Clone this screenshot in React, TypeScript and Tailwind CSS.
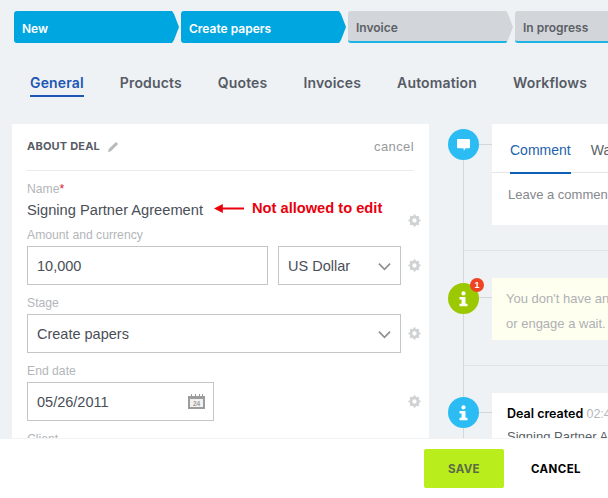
import React from "react";

const stages = [
  { name: "New", active: true, width: "w-[165px]" },
  { name: "Create papers", active: true, width: "w-[165px]" },
  { name: "Invoice", active: false, width: "w-[165px]" },
  { name: "In progress", active: false, width: "w-[165px]" },
];

const tabs = ["General", "Products", "Quotes", "Invoices", "Automation", "Workflows"];

const Gear = ({ className = "" }: { className?: string }) => (
  <svg viewBox="0 0 24 24" className={`w-[13px] h-[13px] shrink-0 ${className}`} fill="none">
    <circle cx="12" cy="12" r="6.5" stroke="#cfd1d3" strokeWidth="5" />
    <path d="M12 1v5M12 18v5M1 12h5M18 12h5M4.2 4.2l3.6 3.6M16.2 16.2l3.6 3.6M4.2 19.8l3.6-3.6M16.2 7.8l3.6-3.6" stroke="#cfd1d3" strokeWidth="4" />
  </svg>
);

const Chevron = () => (
  <svg viewBox="0 0 14 9" className="w-[13px] h-[9px]" fill="none">
    <path d="M1 1.5l6 6 6-6" stroke="#8b8f94" strokeWidth="1.8" />
  </svg>
);

const Info = () => (
  <svg viewBox="0 0 16 20" className="w-[13px] h-[16px]" fill="#fff">
    <circle cx="8" cy="3" r="2.6" />
    <path d="M3 7.5h7.5V16H13v3H3v-3h2.6v-5.5H3z" />
  </svg>
);

const Label = ({ children, className = "" }: { children: React.ReactNode; className?: string }) => (
  <div className={`text-[12.2px] leading-[14px] text-[#b3b6ba] ${className}`}>{children}</div>
);

export default function App() {
  return (
    <div className="relative w-[608px] h-[498px] overflow-hidden bg-[#eef2f4] font-['Liberation_Sans',sans-serif]">
      {/* stages */}
      <div className="flex gap-[2px] pl-[14px] pt-[11px] w-[800px]">
        {stages.map((s) => (
          <div
            key={s.name}
            className={`${s.width} h-[32px] rounded-l-[3px] flex items-center pl-[8px] pt-[4px] font-['Inter',sans-serif] font-semibold text-[12px] [clip-path:polygon(0_0,calc(100%-7px)_0,calc(100%-5px)_3px,100%_50%,calc(100%-5px)_calc(100%-3px),calc(100%-7px)_100%,0_100%)] ${
              s.active ? "bg-[#00a6df] text-white" : "bg-[#d2d5d9] text-[#5c6066] border-b-2 border-b-[#1cb4e4]"
            }`}
          >
            {s.name}
          </div>
        ))}
      </div>

      {/* tabs */}
      <div className="flex gap-[36px] pl-[30px] mt-[29px] h-[25px] font-['Inter',sans-serif] font-semibold text-[14px] tracking-[0.15px] leading-[22px] text-[#565b66]">
        {tabs.map((t, i) => (
          <div key={t} className={i === 0 ? "text-[#1e56b4] h-[25px] border-b-2 border-b-[#1e56b4]" : ""}>
            {t}
          </div>
        ))}
      </div>

      <div className="flex mt-[27px] pl-[12px]">
        {/* about deal */}
        <div className="w-[417px] h-[360px] shrink-0 bg-white pl-[15px]">
          <div className="flex items-center w-[387px] h-[47px] border-b border-b-[#e8eaec] pb-[1px]">
            <span className="text-[11px] font-bold tracking-[0.2px] text-[#565b66] font-['Inter',sans-serif]">ABOUT DEAL</span>
            <svg viewBox="0 0 12 12" className="w-[11px] h-[11px] ml-[8px]" fill="#b8babd">
              <path d="M0 12l.8-3.2L8.6 1l2.4 2.4-7.8 7.8z" />
            </svg>
            <span className="ml-auto text-[13px] tracking-[0.4px] text-[#97999d]">cancel</span>
          </div>

          <Label className="mt-[11px]">
            Name<span className="text-[#e0202a]">*</span>
          </Label>
          <div className="flex items-center h-[24px] mt-[2px] text-[14.67px] text-[#4a4e57]">
            Signing Partner Agreement
            <svg viewBox="0 0 34 10" className="w-[30px] h-[9px] ml-[11px] mb-[3px]" fill="#e8000d">
              <path d="M0 5l10-5v4h24v2H10v4z" />
            </svg>
            <span className="ml-[8px] mb-[4px] font-bold text-[14.67px] text-[#e8000d]">Not allowed to edit</span>
          </div>
          <div className="relative h-0">
            <Gear className="absolute left-[381px] top-[-8px]" />
          </div>

          <Label className="mt-[6px]">Amount and currency</Label>
          <div className="flex items-center mt-[4px]">
            <div className="w-[241px] h-[39px] shrink-0 border border-[#c4c5c7] flex items-center pl-[9px] pt-[2px] text-[14.5px] text-[#4a4e57]">10,000</div>
            <div className="w-[123px] h-[39px] shrink-0 ml-[10px] border border-[#c4c5c7] flex items-center justify-between pl-[9px] pr-[9px] pt-[2px] text-[14.5px] text-[#4a4e57]">
              US Dollar
              <Chevron />
            </div>
            <Gear className="ml-[7px]" />
          </div>

          <Label className="mt-[11px]">Stage</Label>
          <div className="flex items-center mt-[4px]">
            <div className="w-[374px] h-[39px] shrink-0 border border-[#c4c5c7] flex items-center justify-between pl-[9px] pr-[9px] pt-[2px] text-[14.5px] text-[#4a4e57]">
              Create papers
              <Chevron />
            </div>
            <Gear className="ml-[7px]" />
          </div>

          <Label className="mt-[11px]">End date</Label>
          <div className="flex items-center mt-[4px]">
            <div className="w-[187px] h-[39px] shrink-0 border border-[#c4c5c7] flex items-center justify-between pl-[9px] pr-[8px] pt-[2px] text-[14.5px] text-[#4a4e57]">
              05/26/2011
              <svg viewBox="0 0 17 15" className="w-[17px] h-[15px] mb-[2px]">
                <path d="M0 2h17v13H0z" fill="#9c9c9c" />
                <path d="M2 5h13v8H2z" fill="#f1f1f1" />
                <path d="M3 0h1v3H3zM7 0h1v3H7zM11 0h1v3h-1zM14 0h1v3h-1z" fill="#9c9c9c" />
                <text x="8.5" y="12" textAnchor="middle" fontSize="6.5" fontWeight="700" fill="#9c9c9c">24</text>
              </svg>
            </div>
            <Gear className="ml-[194px]" />
          </div>

          <Label className="mt-[11px]">Client</Label>
        </div>

        {/* timeline */}
        <div className="relative ml-[19px] flex-1">
          <div className="absolute left-[15px] top-[20px] bottom-0 w-px bg-[#d3d7da]" />
          <div className="absolute left-[15px] top-[126px] w-[200px] h-px bg-[#dfe3e6]" />
          <div className="absolute left-[15px] top-[241px] w-[200px] h-px bg-[#dfe3e6]" />

          {/* comment */}
          <div className="relative flex h-[154px]">
            <div className="absolute left-[16px] top-[20px] w-[28px] h-px bg-[#d3d7da]" />
            <div className="relative w-[31px] h-[31px] mt-[5px] rounded-full bg-[#2bbcf3] flex items-center justify-center shrink-0">
              <svg viewBox="0 0 14 13" className="w-[13px] h-[12px]" fill="#fff">
                <path d="M1 0h12a1 1 0 011 1v8a1 1 0 01-1 1H9l-1.5 3L7 10H1a1 1 0 01-1-1V1a1 1 0 011-1z" />
              </svg>
            </div>
            <div className="relative ml-[13px] w-[200px] h-[101px] bg-white">
              <div className="flex gap-[20px] h-[49px] pl-[18px] border-b border-b-[#e4e7ea] text-[14px] text-[#5b5f66] whitespace-nowrap">
                <div className="h-[50px] leading-[52px] border-b-2 border-b-[#0f5fb4] text-[#1e62ad]">Comment</div>
                <div className="leading-[52px]">Watch</div>
              </div>
              <div className="mt-[12px] pl-[16px] text-[13px] text-[#85888c] whitespace-nowrap">Leave a comment</div>
            </div>
          </div>

          {/* warning */}
          <div className="relative flex h-[115px]">
            <div className="absolute left-[16px] top-[19px] w-[28px] h-px bg-[#d3d7da]" />
            <div className="relative w-[31px] h-[31px] mt-[5px] rounded-full bg-[#9bc800] flex items-center justify-center shrink-0">
              <Info />
              <div className="absolute left-[22px] top-[-5px] w-[14px] h-[14px] rounded-full bg-[#ee4423] text-white text-[9px] leading-[14px] text-center font-bold">1</div>
            </div>
            <div className="relative ml-[13px] w-[200px] h-[62px] bg-[#fffff0] pl-[14px] text-[13px] leading-[25px] pt-[8px] text-[#aeb1b4] whitespace-nowrap">
              <div>You don't have any</div>
              <div>or engage a wait.</div>
            </div>
          </div>

          {/* created */}
          <div className="relative flex">
            <div className="absolute left-[16px] top-[19px] w-[28px] h-px bg-[#d3d7da]" />
            <div className="relative w-[31px] h-[31px] mt-[4px] rounded-full bg-[#2bbcf3] flex items-center justify-center shrink-0">
              <Info />
            </div>
            <div className="relative ml-[13px] w-[200px] h-[60px] bg-white pl-[15px] pt-[13px] whitespace-nowrap">
              <div className="text-[12.5px] leading-[16px] font-['Inter',sans-serif] font-semibold text-black">
                Deal created <span className="font-['Liberation_Sans',sans-serif] font-normal text-[#b5b8bb]">02:45</span>
              </div>
              <div className="mt-[5px] text-[13px] text-[#5b5f66]">Signing Partner Agreement</div>
            </div>
          </div>
        </div>
      </div>

      {/* footer */}
      <div className="absolute left-0 right-0 bottom-0 h-[60px] bg-white border-t border-t-[#f2f3f4] flex items-center justify-end">
        <button className="w-[80px] h-[39px] pt-[3px] rounded-[2px] bg-[#b9ee1c] font-['Inter',sans-serif] font-bold text-[11.5px] tracking-[0.3px] text-[#5c6b46]">SAVE</button>
        <button className="w-[104px] h-[39px] pt-[3px] font-['Inter',sans-serif] font-bold text-[11.5px] tracking-[0.4px] text-black">CANCEL</button>
      </div>
    </div>
  );
}
